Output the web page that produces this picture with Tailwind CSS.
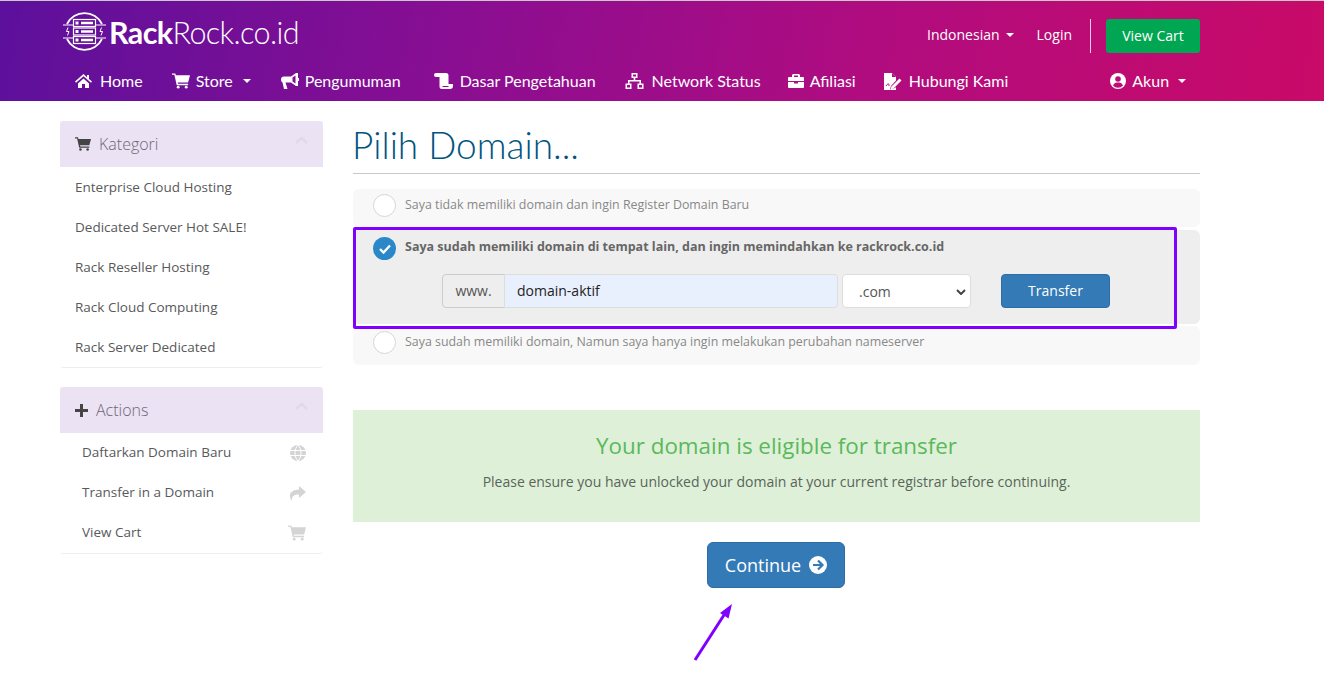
<!DOCTYPE html>
<html lang="en">
<head>
  <meta charset="UTF-8" />
  <title>Pilih Domain</title>
  <script src="https://cdn.jsdelivr.net/npm/@tailwindcss/browser@4"></script>
</head>
<body class="relative h-[684px] overflow-hidden bg-white font-['Open_Sans',sans-serif] text-sm text-[#58595b]">

  <!-- header -->
  <header class="h-[101px] border-t border-[#c9c9c9] bg-[linear-gradient(100deg,#5c109c_0%,#8a0e92_35%,#b00c80_65%,#c90a68_100%)] text-white">
    <div class="ml-[60px] w-[1140px]">
      <div class="flex h-[61px] items-start justify-between">
        <a class="mt-[10px] ml-[3px] flex items-center">
          <svg class="h-[41px] w-[43px]" viewBox="0 0 43 41" fill="none" stroke="white">
            <path d="M4 13A19.500 19.500 0 0 1 39 13M4 28A19.500 19.500 0 0 0 39 28" stroke-width="1.800" />
            <path d="M0 14h10M33 14h10M0 27h10M33 27h10" stroke-width="1.200" />
            <path d="M5 16.500 3.500 20.500H6L4.500 24.500M38.500 16.500 37 20.500h2.500L38 24.500" stroke-width="1" />
            <rect x="10.500" y="8.500" width="22" height="7" stroke-width="1.200" />
            <rect x="10.500" y="17" width="22" height="7" stroke-width="1.200" />
            <rect x="10.500" y="25.500" width="22" height="7" stroke-width="1.200" />
            <path d="M18 12h12M18 20.500h12M18 29h12" stroke-width="2.400" />
            <path d="M12.500 10.500h3v3h-3zM12.500 19h3v3h-3zM12.500 27.500h3v3h-3z" fill="white" stroke="none" />
          </svg>
          <span class="ml-[3px] font-['Lato',sans-serif] text-[30.5px] leading-[40px] tracking-[-0.6px]"><b class="font-bold">Rack</b><span class="font-light">Rock.co.id</span></span>
        </a>
        <div class="mt-[18px] flex items-start font-['Open_Sans',sans-serif] text-sm">
          <span class="mt-[6px] -ml-px flex items-center">Indonesian<i class="ml-[6px] h-0 w-0 border-x-[4px] border-t-[4px] border-x-transparent border-t-white"></i></span>
          <span class="mt-[6px] ml-[23px]">Login</span>
          <span class="ml-[18px] h-[34px] w-px bg-white/80"></span>
          <a class="ml-[15px] flex h-[34px] w-[94px] items-center justify-center rounded-[3px] bg-[#00a651]">View Cart</a>
        </div>
      </div>
      <nav class="flex h-[39px] items-start pl-[15px] font-['Lato',sans-serif] text-base leading-[38px]">
        <a class="flex items-center">
          <svg class="mr-[8px] h-[16px] w-[17px] fill-white" viewBox="0 0 17 16"><path d="M8.500 1 0 8.500l1 1.200L8.500 3.200 16 9.700l1-1.200-3-2.600V2h-2v2.200zM3 10.500V15h4v-4h3v4h4v-4.500L8.500 5.500z" /></svg>Home
        </a>
        <a class="ml-[29px] flex items-center">
          <svg class="mr-[6px] h-[16px] w-[18px] fill-white" viewBox="0 0 19 16"><path d="M0 0h3.500l.6 2H19l-2 7.500H6l.4 1.500H17v1.500H5L2.500 1.500H0z" /><circle cx="6.500" cy="14.500" r="1.500" /><circle cx="15" cy="14.500" r="1.500" /></svg>Store<i class="ml-[10px] h-0 w-0 border-x-[4px] border-t-[4px] border-x-transparent border-t-white"></i>
        </a>
        <a class="ml-[30px] flex items-center">
          <svg class="mr-[6px] h-[16px] w-[18px]" viewBox="0 0 18 16"><path d="M15 0h2v13h-2l-5-3.500H4.500L6.500 16H3L1.500 9.500A3 3 0 0 1 0 7V6.500A3 3 0 0 1 3 3.500h7z" fill="white" /><path d="M17 5h1v3h-1z" fill="white" /><path d="M11.500 4.500 14.500 2.500V10.500L11.500 8.500z" fill="#860e95" /></svg>Pengumuman
        </a>
        <a class="ml-[33px] flex items-center">
          <svg class="mr-[7px] h-[16px] w-[19px] fill-white" viewBox="0 0 19 16"><path d="M0 2A2 2 0 0 1 2 0h10a2.500 2.500 0 0 1 2.500 2.500V11H19v2a3 3 0 0 1-3 3H8a2.500 2.500 0 0 1-2.500-2.500V4H2A2 2 0 0 1 0 2z" /><path d="M8.500 13.500h6" stroke="#920d8f" stroke-width="1" /></svg>Dasar Pengetahuan
        </a>
        <a class="ml-[29px] flex items-center">
          <svg class="mr-[8px] h-[16px] w-[19px] fill-white" viewBox="0 0 19 16"><path d="M6.500 0h6v5h-2.200v2H16v3.500h2.500V16h-6v-5.500H14.500V8.500h-10v2H6.500V16h-6v-5.500H3V7h5.700V5H6.500z" /><path d="M8 1.500h3v2H8zM2 12h3v2.500H2zM14 12h3v2.500h-3z" fill="#a50c85" /></svg>Network Status
        </a>
        <a class="ml-[27px] flex items-center">
          <svg class="mr-[6px] h-[14px] w-[16px] fill-white" viewBox="0 0 16 14"><path d="M5 0h6l1 1v2h3a1 1 0 0 1 1 1v3H0V4a1 1 0 0 1 1-1h3V1zm1 1.500V3h4V1.500zM0 8h6v1.500h4V8h6v5a1 1 0 0 1-1 1H1a1 1 0 0 1-1-1z" /></svg>Afiliasi
        </a>
        <a class="ml-[28px] flex items-center">
          <svg class="mr-[7px] h-[17px] w-[18px]" viewBox="0 0 18 17"><path d="M0 0h8l4 4v3.500L7 13l-1 3.500 5-1.500 1-1v3H0z" fill="white" /><path d="M8 0v4h4z" fill="#b10c7f" /><path d="M15.500 5.500l2 2-8 8-3 1 1-3z" fill="white" /><path d="M2 13c2-3 3-3 3 0" stroke="#b10c7f" stroke-width="1" fill="none" /></svg>Hubungi Kami
        </a>
        <a class="ml-[102px] flex items-center">
          <svg class="mr-[6px] h-[16px] w-[16px]" viewBox="0 0 16 16"><circle cx="8" cy="8" r="8" fill="white" /><circle cx="8" cy="6" r="2.800" fill="#bb0c78" /><path d="M3 12.500c1-2.500 3-3 5-3s4 .5 5 3a6.500 6.500 0 0 1-10 0z" fill="#bb0c78" /></svg>Akun<i class="ml-[9px] h-0 w-0 border-x-[4px] border-t-[4px] border-x-transparent border-t-white"></i>
        </a>
      </nav>
    </div>
  </header>

  <main class="ml-[60px] flex w-[1140px] items-start gap-[30px] pt-[20px]">
    <!-- sidebar -->
    <aside class="w-[263px] shrink-0 text-[13.5px]">
      <section class="mb-[19px] rounded-[3px] border-b border-[#eee]">
        <div class="flex h-[46px] items-center justify-between rounded-t-[3px] bg-[#ebe2f4] px-[15px]">
          <span class="flex items-center text-base font-light text-[#6f6777]">
            <svg class="mr-[8px] h-[14px] w-[16px] fill-[#444]" viewBox="0 0 19 16"><path d="M0 0h3.500l.6 2H19l-2 7.500H6l.4 1.500H17v1.500H5L2.500 1.500H0z" /><circle cx="6.500" cy="14.500" r="1.500" /><circle cx="15" cy="14.500" r="1.500" /></svg>Kategori
          </span>
          <svg class="mb-[8px] h-[8px] w-[13px]" viewBox="0 0 13 8" fill="none" stroke="#e1dae6" stroke-width="2.500"><path d="M1 7l5.500-5L12 7" /></svg>
        </div>
        <a class="block h-[40px] px-[15px] leading-[40px]">Enterprise Cloud Hosting</a>
        <a class="block h-[40px] px-[15px] leading-[40px]">Dedicated Server Hot SALE!</a>
        <a class="block h-[40px] px-[15px] leading-[40px]">Rack Reseller Hosting</a>
        <a class="block h-[40px] px-[15px] leading-[40px]">Rack Cloud Computing</a>
        <a class="block h-[40px] px-[15px] leading-[40px]">Rack Server Dedicated</a>
      </section>
      <section class="rounded-[3px] border-b border-[#eee]">
        <div class="flex h-[46px] items-center justify-between rounded-t-[3px] bg-[#ebe2f4] px-[15px]">
          <span class="flex items-center text-base font-light text-[#6f6777]">
            <svg class="mr-[8px] h-[13px] w-[13px] fill-[#444]" viewBox="0 0 13 13"><path d="M5 0h3v5h5v3H8v5H5V8H0V5h5z" /></svg>Actions
          </span>
          <svg class="mb-[8px] h-[8px] w-[13px]" viewBox="0 0 13 8" fill="none" stroke="#e1dae6" stroke-width="2.500"><path d="M1 7l5.500-5L12 7" /></svg>
        </div>
        <a class="flex h-[40px] items-center justify-between pr-[17px] pl-[22px]">Daftarkan Domain Baru
          <svg class="h-[16px] w-[16px] fill-[#d4d4d4]" viewBox="0 0 16 16"><circle cx="8" cy="8" r="8" /><path d="M0 5.500h16M0 10.500h16M8 0c-4 4-4 12 0 16M8 0c4 4 4 12 0 16" fill="none" stroke="#fff" stroke-width="1" /></svg>
        </a>
        <a class="flex h-[40px] items-center justify-between pr-[17px] pl-[22px]">Transfer in a Domain
          <svg class="h-[15px] w-[17px] fill-[#d4d4d4]" viewBox="0 0 17 15"><path d="M10 0l7 6-7 6V8.500C5 8.500 2.500 10 3 15-.5 11 -.500 4 10 3.500z" /></svg>
        </a>
        <a class="flex h-[40px] items-center justify-between pr-[17px] pl-[22px]">View Cart
          <svg class="h-[16px] w-[18px] fill-[#d4d4d4]" viewBox="0 0 19 16"><path d="M0 0h3.500l.6 2H19l-2 7.500H6l.4 1.500H17v1.500H5L2.500 1.500H0z" /><circle cx="6.500" cy="14.500" r="1.500" /><circle cx="15" cy="14.500" r="1.500" /></svg>
        </a>
      </section>
    </aside>

    <!-- main column -->
    <div class="w-[847px]">
      <h1 class="h-[53px] border-b border-[#c8c8c8] font-['Lato',sans-serif] text-[37px] leading-[47px] font-light text-[#005580]"><span class="-ml-px inline-block">Pilih Domain...</span></h1>

      <div class="mt-[15px] flex h-[38px] items-start rounded-[6px] bg-[#f8f8f8] pt-[5px] pl-[20px]">
        <span class="h-[23px] w-[23px] rounded-full border border-[#d9d6d0] bg-white"></span>
        <span class="ml-[9px] text-[12.4px] leading-[22px] text-[#888]">Saya tidak memiliki domain dan ingin Register Domain Baru</span>
      </div>

      <div class="mt-[3px] h-[94px] rounded-[6px] bg-[#eee] pt-[7px] pl-[20px]">
        <div class="flex items-start">
          <span class="flex h-[23px] w-[23px] items-center justify-center rounded-full bg-[#2a88c8]">
            <svg class="h-[10px] w-[12px]" viewBox="0 0 12 10" fill="none" stroke="white" stroke-width="2.400"><path d="M1 5l3.500 3.500L11 1.500" /></svg>
          </span>
          <span class="ml-[9px] text-[12.5px] leading-[19px] font-bold text-[#666]">Saya sudah memiliki domain di tempat lain, dan ingin memindahkan ke rackrock.co.id</span>
        </div>
        <div class="mt-[14px] ml-[69px] flex items-center">
          <span class="flex h-[34px] w-[63px] items-center justify-center rounded-l-[4px] border border-[#ccc] bg-[#eee] text-sm text-[#555]">www.</span>
          <span class="-ml-px flex h-[34px] w-[334px] items-center rounded-r-[4px] border border-[#ddd] bg-[#e8f0fe] pl-[12px] text-sm text-[#222]">domain-aktif</span>
          <span class="ml-[4px] flex h-[34px] w-[129px] items-center justify-between rounded-[4px] border border-[#ddd] bg-white pt-[1px] pr-[4px] pl-[16px] text-sm text-[#555]">.com
            <svg class="h-[6px] w-[10px]" viewBox="0 0 10 6" fill="none" stroke="#444" stroke-width="2"><path d="M1 1l4 4 4-4" /></svg>
          </span>
          <a class="ml-[30px] flex h-[34px] w-[109px] items-center justify-center rounded-[4px] border border-[#2e6da4] bg-[#337ab7] text-sm text-white">Transfer</a>
        </div>
      </div>

      <div class="mt-[2px] flex h-[39px] items-start rounded-[6px] bg-[#f8f8f8] pt-[5px] pl-[20px]">
        <span class="h-[23px] w-[23px] rounded-full border border-[#d9d6d0] bg-white"></span>
        <span class="ml-[9px] text-[12.4px] leading-[22px] text-[#888]">Saya sudah memiliki domain, Namun saya hanya ingin melakukan perubahan nameserver</span>
      </div>

      <div class="mt-[45px] h-[112px] bg-[#dff0d8] pt-[20px] text-center">
        <h2 class="text-[22.4px] leading-[32px] text-[#5cb85c]">Your domain is eligible for transfer</h2>
        <p class="mt-[10px] text-sm leading-[20px] text-[#58655a]">Please ensure you have unlocked your domain at your current registrar before continuing.</p>
      </div>

      <div class="mt-[20px] flex justify-center pr-px">
        <a class="flex h-[46px] w-[138px] items-center justify-center rounded-[6px] border border-[#2e6da4] bg-[#337ab7] text-lg text-white">Continue
          <svg class="ml-[8px] h-[18px] w-[18px]" viewBox="0 0 18 18"><circle cx="9" cy="9" r="9" fill="white" /><path d="M4 9h9M9 4.500 13.500 9 9 13.500" fill="none" stroke="#337ab7" stroke-width="2.200" /></svg>
        </a>
      </div>
    </div>
  </main>

  <!-- annotation overlays -->
  <div class="absolute top-[227px] left-[353px] h-[102px] w-[824px] rounded-[2px] border-[3px] border-[#7f00ff]"></div>
  <svg class="absolute top-[600px] left-[690px] h-[64px] w-[46px]" viewBox="0 0 46 64">
    <path d="M5 60 34 15" stroke="#7f00ff" stroke-width="3" fill="none" />
    <path d="M42 4 38.500 18.500 30 13z" fill="#7f00ff" />
  </svg>
</body>
</html>
